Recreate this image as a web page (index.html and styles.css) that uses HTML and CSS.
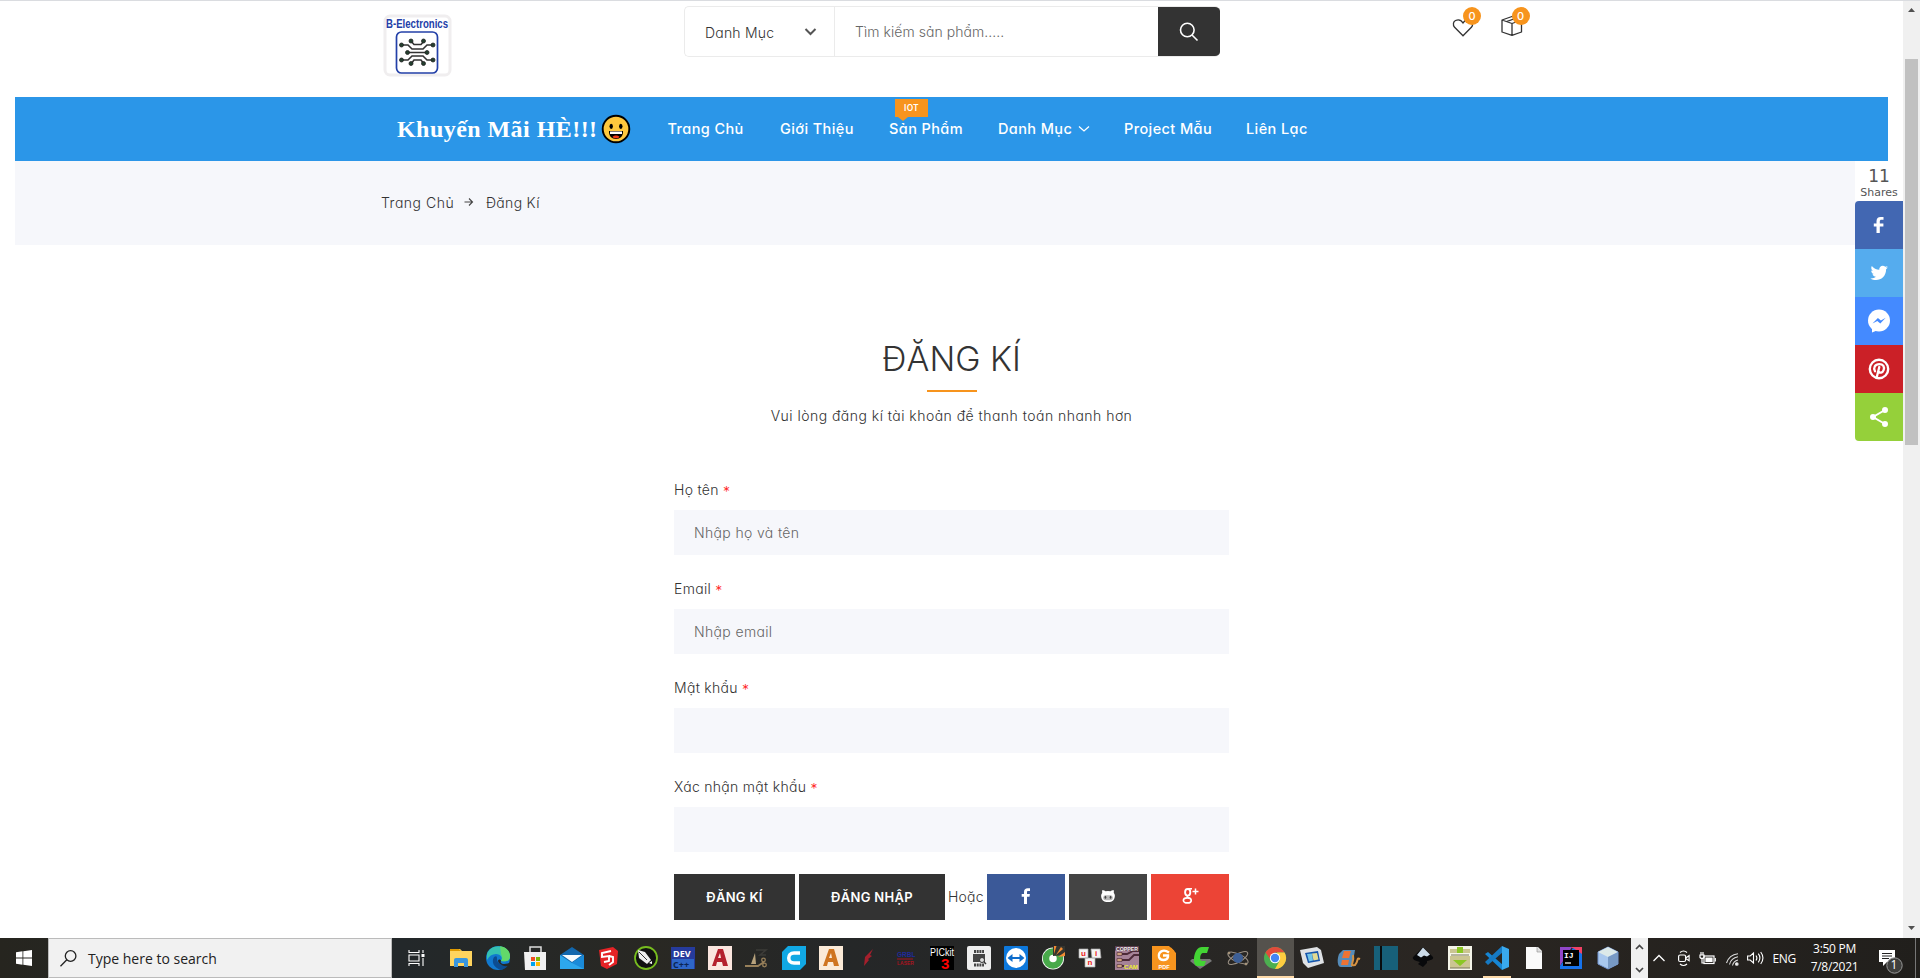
FILE: index.html
```html
<!DOCTYPE html>
<html lang="vi">
<head>
<meta charset="utf-8">
<title>B-Electronics - Đăng Kí</title>
<link rel="stylesheet" href="styles.css">
</head>
<body>
<div class="viewport">
  <div class="page">
    <header class="top">
      <svg class="logo" width="68" height="62" viewBox="0 0 68 62">
        <rect x="1" y="1" width="65" height="59" rx="5" fill="#fff" stroke="#f0eeef" stroke-width="3"/>
        <text x="2" y="13" textLength="62" lengthAdjust="spacingAndGlyphs" class="logo-text">B-Electronics</text>
        <rect x="12.500" y="17" width="41" height="41" rx="5" fill="#fff" stroke="#2340a8" stroke-width="1.700"/>
        <g fill="none" stroke="#333" stroke-width="1.600">
          <path d="M18 30h6l4 4h11l4-4h6M27 26l3 3.500h7l3-3.500M24 37.500h18M18 45h6l4-4h11l4 4h6M27 49l3-4h7l3 4"/>
        </g>
        <g fill="#23402f" stroke="#222" stroke-width=".8"><circle cx="17.500" cy="30" r="2"/><circle cx="49" cy="30" r="2"/><circle cx="27" cy="26" r="2"/><circle cx="39.500" cy="26" r="2"/><circle cx="23.500" cy="37.500" r="2"/><circle cx="43" cy="37.500" r="2"/><circle cx="17.500" cy="45" r="2"/><circle cx="49" cy="45" r="2"/><circle cx="27" cy="48.500" r="2"/><circle cx="39.500" cy="48.500" r="2"/></g>
      </svg>
      <form class="search">
        <div class="search-cat"><span>Danh Mục</span><svg width="13" height="10" viewBox="0 0 13 10"><path d="M1.500 2l5 5 5-5" fill="none" stroke="#555" stroke-width="2"/></svg></div>
        <div class="search-input">Tìm kiếm sản phẩm.....</div>
        <div class="search-btn"><svg width="20" height="20" viewBox="0 0 20 20" fill="none" stroke="#fff" stroke-width="1.600"><circle cx="8.300" cy="8" r="6.800"/><path d="M13 13l5.500 5.500"/></svg></div>
      </form>
      <div class="actions">
        <div class="action"><svg width="22" height="18" viewBox="0 0 22 18" fill="none" stroke="#333" stroke-width="1.300"><path d="M11 16.800L2.600 8.300C.5 5.500 1.300 2.700 3.500 1.500 6.500.2 9.300 1.200 11 4c1.700-2.800 4.500-3.800 7.500-2.500 2.200 1.200 3 4 .9 6.800z"/></svg><b class="count">0</b></div>
        <div class="action"><svg width="22" height="20" viewBox="0 0 22 20" fill="none" stroke="#333" stroke-width="1.300" stroke-linejoin="round"><path d="M1 4l10-3.500L20.500 4v12L11 19.300 1 16zM1 4l10 3.500L20.500 4M11 7.500v11.800M5.500 5.600L15.500 2"/></svg><b class="count">0</b></div>
      </div>
    </header>
    <nav class="nav">
      <div class="promo"><span>Khuyến Mãi HÈ!!!</span>
        <svg width="30" height="30" viewBox="0 0 30 30"><circle cx="15" cy="15" r="13.300" fill="#ffc83d" stroke="#000" stroke-width="1.900"/><ellipse cx="10.200" cy="12.300" rx="1.700" ry="2.600"/><ellipse cx="19.800" cy="12.300" rx="1.700" ry="2.600"/><path d="M8 17h14c.5 5-3 8-7 8s-7.500-3-7-8z" fill="#000"/><path d="M9 17.500h12v2.500H9z" fill="#fff"/><path d="M11.500 23c1-2 6-2 7 0-1 1.800-6 1.800-7 0z" fill="#f03a17"/></svg>
      </div>
      <a>Trang Chủ</a><a>Giới Thiệu</a><a>Sản Phẩm<i class="tag">IOT</i></a><a>Danh Mục<svg width="12" height="8" viewBox="0 0 12 8"><path d="M1 1.500l5 4.500 5-4.500" fill="none" stroke="#fff" stroke-width="1.300"/></svg></a><a>Project Mẫu</a><a>Liên Lạc</a>
    </nav>
    <div class="crumbs"><span class="home">Trang Chủ</span><svg width="10" height="10" viewBox="0 0 10 10" fill="none" stroke="#444" stroke-width="1.100"><path d="M.5 5h8M5 1.500L8.500 5 5 8.500"/></svg><span class="here">Đăng Kí</span></div>
    <main class="register">
      <h1>ĐĂNG KÍ</h1>
      <p class="lead">Vui lòng đăng kí tài khoản để thanh toán nhanh hơn</p>
      <div class="field"><label>Họ tên <em>*</em></label><div class="input">Nhập họ và tên</div></div>
      <div class="field"><label>Email <em>*</em></label><div class="input">Nhập email</div></div>
      <div class="field"><label>Mật khẩu <em>*</em></label><div class="input"></div></div>
      <div class="field last"><label>Xác nhận mật khẩu <em>*</em></label><div class="input"></div></div>
      <div class="buttons">
        <button class="btn signup">ĐĂNG KÍ</button><button class="btn signin">ĐĂNG NHẬP</button><span class="or">Hoặc</span>
        <button class="btn fb"><svg width="10" height="16" viewBox="0 0 10 16"><path d="M9 .3v2.600H7.300C6.200 2.900 6 3.400 6 4.200V6h2.900l-.4 2.800H6V16H3V8.800H.7V6H3V3.900C3 1.500 4.500.2 6.700.2c1 0 2 .1 2.300.1z" fill="#fff"/></svg></button>
        <button class="btn gh"><svg width="14" height="12" viewBox="0 0 16 14"><path d="M1.500 0C3 .1 4.200.8 5 1.500a14 14 0 016 0C11.800.8 13 .1 14.500 0c.5 1.300.4 2.600.2 3.300C16.500 5.500 16.300 8 15.200 10.500 14 13.500 11 14 8 14S2 13.500.8 10.500C-.3 8-.5 5.500 1.300 3.300 1.100 2.600 1 1.300 1.500 0z" fill="#fff"/><rect x="2.500" y="6" width="11" height="6" rx="2.500" fill="#b9b9b9"/><ellipse cx="5" cy="8.500" rx="1" ry="1.800" fill="#444"/><ellipse cx="11" cy="8.500" rx="1" ry="1.800" fill="#444"/></svg></button>
        <button class="btn gp"><svg width="17" height="16" viewBox="0 0 17 16" fill="none" stroke="#fff"><ellipse cx="5.700" cy="4.300" rx="2.600" ry="3.300" stroke-width="1.900"/><path d="M6 .8h4M6 7.600C4 9 6 9.300 7.500 10.200" stroke-width="1.600"/><ellipse cx="5.300" cy="12.400" rx="3.900" ry="2.500" stroke-width="1.700"/><path d="M10.500 3.500h6M13.500.6v6" stroke-width="1.500"/></svg></button>
      </div>
    </main>
  </div>
  <aside class="share">
    <div class="share-count"><strong>11</strong><span>Shares</span></div>
    <div class="tile s-fb"><svg width="32" height="32" viewBox="0 0 32 32" fill="#fff"><path d="M20.500 8v2.800h-2c-1.200 0-1.700.5-1.700 1.700v2h3.600v3h-3.600V24h-3.300v-6.500h-2.700v-3h2.700v-2.200C13.500 9.500 15 8 17.600 8z"/></svg></div>
    <div class="tile s-tw"><svg width="32" height="32" viewBox="0 0 32 32" fill="#fff"><path d="M25 10.300c-.6.300-1.300.5-2 .6.700-.5 1.300-1.200 1.600-2-.7.400-1.500.7-2.300.9-2.400-2.500-6.500-.6-6 3-3-.1-5.700-1.600-7.500-3.800-1 1.700-.5 3.800 1.100 4.900-.6 0-1.200-.2-1.700-.5 0 1.800 1.200 3.300 2.900 3.700-.5.100-1.100.2-1.600.1.500 1.500 1.800 2.500 3.400 2.600C11.400 21 9.300 21.600 7.300 21.400c6.700 4.200 15.800.3 15.800-9.100.8-.5 1.400-1.200 1.900-2z"/></svg></div>
    <div class="tile s-ms"><svg width="32" height="32" viewBox="0 0 32 32"><circle cx="16" cy="15.500" r="11" fill="#fff"/><path d="M9 21v6.500l5-2z" fill="#fff"/><path d="M9.500 18.500l5.400-5.500 3 2.500 4.800-2.700-5.400 5.700-3-2.600z" fill="#448aff"/></svg></div>
    <div class="tile s-pi"><svg width="32" height="32" viewBox="0 0 32 32" fill="none" stroke="#fff" stroke-linecap="round"><circle cx="16" cy="16" r="9.200" stroke-width="2.400"/><path d="M12 18.300c-2-3.700 0-7.200 4.300-7.200 4 0 5.500 3 4.300 6-1 2.800-4 3.200-5 1.300M16.300 14l-2.500 10" stroke-width="2.300"/></svg></div>
    <div class="tile s-sh"><svg width="32" height="32" viewBox="0 0 32 32" fill="#fff" stroke="#fff" stroke-width="2"><path d="M22 9L10 16l12 7" fill="none"/><circle cx="22" cy="9" r="2"/><circle cx="10" cy="16" r="2"/><circle cx="22" cy="23" r="2"/></svg></div>
  </aside>
  <div class="scrollbar"><svg width="17" height="17" viewBox="0 0 17 17"><path d="M5 11l3.500-4 3.500 4z" fill="#505050"/></svg><div class="thumb"></div><svg width="17" height="17" viewBox="0 0 17 17"><path d="M5 6l3.500 4L12 6z" fill="#505050"/></svg></div>
</div>
<footer class="taskbar">
  <div class="start"><svg width="16" height="16" viewBox="0 0 16 16" fill="#fff"><path d="M0 2.200L6.500 1.300v6.300H0zM7.300 1.200L16 0v7.600H7.300zM0 8.400h6.500v6.300L0 13.800zM7.300 8.400H16V16l-8.700-1.200z"/></svg></div>
  <div class="tb-search"><svg width="17" height="17" viewBox="0 0 17 17" fill="none" stroke="#222" stroke-width="1.300"><circle cx="10.600" cy="6" r="5.300"/><path d="M6.800 9.800L.5 16.300"/></svg><span>Type here to search</span></div>
  <div class="taskview"><svg width="17" height="16" viewBox="0 0 17 16" fill="none" stroke="#fff" stroke-width="1.100"><path d="M1 0v2.500h10V0M1 16v-2.500h10V16M1 5h10v6H1zM15 0v3M15 8v8"/><path d="M13.500 4h3v3h-3z" fill="#fff" stroke="none"/></svg></div>
  <div class="apps">
    <div><svg viewBox="0 0 24 24"><path d="M1 3h10l2 2h10v15H1z" fill="#ffd45e"/><path d="M1 3h9l2 2H1z" fill="#e09a00"/><path d="M5 21v-7q0-2 2-2h10q2 0 2 2v7h-4v-4H9v4z" fill="#3a96dd"/></svg></div>
    <div><svg viewBox="0 0 24 24"><circle cx="12" cy="12" r="12" fill="#1179cf"/><path d="M1 8C4-2 22-3 24 10c0 5-4 6-9 5 2-3 0-7-5-7-4 0-7 2-9 6z" fill="#35c1b1"/><path d="M14 .3C20 1 24 5 24 10c0 5-4 6-9 5 2-3 1-5 0-7z" fill="#62d86a"/><path d="M8 11c-3 5 0 11 7 13 4-1 7-4 8-6-5 3-12 0-12-5 0-2 0-4-3-2z" fill="#0c4d91"/><path d="M15 15c-1 1 0 3 3 3 3 0 5-1 5-1l1 3c-5 1-11-1-12-5 0-2 3-2 3 0z" fill="#252827"/></svg></div>
    <div><svg viewBox="0 0 24 24"><path d="M7 6V1h11v5" fill="none" stroke="#ddd" stroke-width="1.500"/><path d="M1 6h22v18H2z" fill="#f1f1f1"/><path d="M8 11h4v4H8z" fill="#f25022"/><path d="M13 11h4v4h-4z" fill="#7fba00"/><path d="M8 16h4v4H8z" fill="#00a4ef"/><path d="M13 16h4v4h-4z" fill="#ffb900"/></svg></div>
    <div><svg viewBox="0 0 24 24"><path d="M0 9L12 1l12 8v14H0z" fill="#1267ad"/><path d="M0 9l12 8 12-8v14H0z" fill="#2da7ec"/><path d="M24 9v14L12 17z" fill="#1a8ad8"/><path d="M2 9h20l-10 7z" fill="#f5fafd"/></svg></div>
    <div><svg viewBox="0 0 24 24"><path d="M2 4l14-3 5 4-1 13-10 5-6-3z" fill="#e52326"/><path d="M14 5L5 7v4l7-1v5l-5 1M12 10l4 1v5l-4 3" fill="none" stroke="#fff" stroke-width="1.900"/></svg></div>
    <div><svg viewBox="0 0 24 24"><circle cx="12" cy="12" r="11" fill="#111" stroke="#77bc1f" stroke-width="1.800"/><path d="M4 4l7 2 6 8-4 4-8-6z" fill="#eee"/><path d="M15 17l3-2v3z" fill="#fff"/><path d="M5 6l8 8" stroke="#333"/></svg></div>
    <div><svg viewBox="0 0 24 24"><rect y="1" width="24" height="22" fill="#263b9c"/><rect x="1" y="13" width="22" height="10" fill="#2e66c8"/><text x="2" y="11" class="t-dev">DEV</text><text x="2" y="22" class="t-cpp">C++</text></svg></div>
    <div><svg viewBox="0 0 24 24"><rect width="24" height="24" fill="#fbe6df"/><path d="M4 20L10 3h5l5 17h-5l-1-4H9l-1 4zM10 12h3l-1-5z" fill="#b4202d" fill-rule="evenodd"/></svg></div>
    <div><svg viewBox="0 0 24 24"><path d="M6 18l4-11 1 11z" fill="#b7a27c"/><path d="M0 20h13l6-4" fill="none" stroke="#98805a" stroke-width="1.800"/><circle cx="18.500" cy="14" r="1.800" fill="none" stroke="#98805a" stroke-width="1.300"/><circle cx="19.500" cy="19" r="1.800" fill="none" stroke="#98805a" stroke-width="1.300"/><path d="M11 4h10l-6 5h6" fill="none" stroke="#3d3c38" stroke-width="1.500"/></svg></div>
    <div><svg viewBox="0 0 24 24"><path d="M6 0h18v18l-6 6H0V6z" fill="#11a8e4"/><path d="M18 7h-6c-7 0-7 10 0 10h6" fill="none" stroke="#fff" stroke-width="3.500"/></svg></div>
    <div><svg viewBox="0 0 24 24"><rect width="24" height="24" fill="#fbead8"/><path d="M4 20L10 3h5l5 17h-5l-1-4H9l-1 4zM10 12h3l-1-5z" fill="#cf7420" fill-rule="evenodd"/></svg></div>
    <div><svg viewBox="0 0 24 24"><path d="M8 20l1-9 8-8-3 6 2 1-4 3 1 1z" fill="#a51f2c"/></svg></div>
    <div><svg viewBox="0 0 24 24"><text x="4" y="11" class="t-grbl">GRBL</text><text x="4" y="19" class="t-laser">LASER</text><path d="M4 13h16" stroke="#a71420"/></svg></div>
    <div><svg viewBox="0 0 24 24"><rect width="24" height="24" fill="#000"/><text x="0" y="10" textLength="24" lengthAdjust="spacingAndGlyphs" class="t-pic">PICkit</text><text x="11" y="23" class="t-three">3</text></svg></div>
    <div><svg viewBox="0 0 24 24"><rect width="24" height="24" rx="2" fill="#eee"/><rect x="6" y="8" width="12" height="8" fill="#444"/><path d="M7 5.500h10M7 19h10" stroke="#444" stroke-width="3" stroke-dasharray="2 .7"/><circle cx="15" cy="14" r="2.500" fill="#ddd" stroke="#333"/><path d="M17 16l2 2" stroke="#333" stroke-width="1.500"/></svg></div>
    <div><svg viewBox="0 0 24 24"><rect width="24" height="24" rx="1" fill="#0d78dc"/><circle cx="12" cy="12" r="10" fill="#fff"/><path d="M3.500 12l5-4v3h7V8l5 4-5 4v-3h-7v3z" fill="#0d6ccb"/></svg></div>
    <div><svg viewBox="0 0 24 24"><circle cx="12" cy="12.500" r="11" fill="#fff"/><circle cx="12" cy="12.500" r="7" fill="#fff" stroke="#48a94a" stroke-width="6.500"/><path d="M12 10V0h12v9z" fill="#35352f"/><path d="M13 8V0h2.500zM15 9l5-8 2 2zM17 11l7-5v4z" fill="#f28b32"/></svg></div>
    <div><svg viewBox="0 0 24 24"><g fill="#f3f3f3" stroke="#aaa" stroke-width=".7"><path d="M1 3h9v9H1zM13 3h9l1 9h-9zM7 12h10v9H7z"/></g><text x="3" y="10" class="t-uni">u</text><text x="17" y="10" class="t-uni">i</text><text x="9.500" y="19" class="t-uni">n</text></svg></div>
    <div><svg viewBox="0 0 24 24"><rect width="24" height="24" fill="#a68398"/><path d="M0 0h24v4.500H0z" fill="#5a3c4c"/><path d="M7 8h5l6-3h6M7 14h7l5-5h5M7 20h2" fill="none" stroke="#4c2a38" stroke-width="1.800"/><path d="M2 6.500h5v3H2zM2 12.500h5v3H2zM2 18.500h5v3H2z" fill="#cda27e" stroke="#4c2a38" stroke-width=".6"/><text x="1" y="4.500" textLength="22" lengthAdjust="spacingAndGlyphs" class="t-cop">COPPER</text><text x="9" y="23" textLength="14" lengthAdjust="spacingAndGlyphs" class="t-cam">CAM</text></svg></div>
    <div><svg viewBox="0 0 24 24"><path d="M0 0h17l7 7v17H0z" fill="#f7941e"/><path d="M18.500 1v4.500H23z" fill="#f7941e"/><path d="M17 6.500C11 2.500 6 6 7 11c1 4 8 4 9 0v-1.500h-5" fill="none" stroke="#fff" stroke-width="2.300"/><text x="6.500" y="22.500" class="t-pdf">PDF</text></svg></div>
    <div><svg viewBox="0 0 24 24"><path d="M1 15l10 8 12-8-2-2H3z" fill="#777"/><path d="M20 1l-2 6h-4c-3 0-4 8-1 8h4l-2 5H8c-5 0-4-19 5-19z" fill="#43d434"/></svg></div>
    <div><svg viewBox="0 0 24 24" fill="none" stroke="#9b9185"><ellipse cx="12" cy="12" rx="11" ry="4" transform="rotate(25 12 12)"/><ellipse cx="12" cy="12" rx="11" ry="4" transform="rotate(-30 12 12)"/><circle cx="12" cy="12" r="5" fill="#3d5f96" stroke="none"/><circle cx="3" cy="7" r="1" fill="#e7b260"/><circle cx="20" cy="18" r="1" fill="#e7b260"/></svg></div>
    <div class="active"><svg viewBox="0 0 24 24"><circle cx="12" cy="12" r="11" fill="#4caf50"/><path d="M2.500 6.500A11 11 0 0121.500 6.500H12L7 13z" fill="#e14b3b"/><path d="M21.600 6.500A11 11 0 0112 23l5-9-3-7.500z" fill="#ffcd40"/><circle cx="12" cy="12" r="5.200" fill="#fff"/><circle cx="12" cy="12" r="4.200" fill="#4285f4"/></svg></div>
    <div><svg viewBox="0 0 24 24"><path d="M0 4l17-3 4 3 3 13-16 5-5-5z" fill="#dfe2e5"/><path d="M5 7l13-2 2 10-12 2z" fill="#1554ac"/><path d="M7 8l5-.5 1 7-4 1z" fill="#72c5e9"/><path d="M12 7.500l5-.5 1.500 6.500-5 1z" fill="#e3db93"/></svg></div>
    <div><svg viewBox="0 0 24 24"><path d="M2 8l4-4h12l-3 17H4c-4 0-4-8-2-13z" fill="#558bb8"/><path d="M7 5h7l-2 7H5zM5 14h7l-1 5H4z" fill="#ec7334"/><path d="M16 9c2 9-5 11 2 10 4-4 1-8 5-6" fill="none" stroke="#d69242" stroke-width="2"/></svg></div>
    <div><svg viewBox="0 0 24 24"><rect width="24" height="24" fill="#176079"/><path d="M7 0v24" stroke="#080c0e" stroke-width="2"/></svg></div>
    <div><svg viewBox="0 0 24 24"><path d="M12 1l10 10c1 3-3 3-6 4v2l-4 4-5-3 2-2c-5-1-8-3-7-5z" fill="#08090b"/><path d="M12 1.500l7 7-3 2-3-1-3 2-4-2.500z" fill="#cbdbe9"/></svg></div>
    <div><svg viewBox="0 0 24 24"><rect width="24" height="24" fill="#f5f5e9"/><path d="M2 3h20v4H2zM2 10h20v12H2z" fill="#cbc591"/><path d="M9 1h6v6H9zM5 14h14l-7 6z" fill="#8bc724"/><path d="M3 9h18M2 22h20" stroke="#797557"/></svg></div>
    <div class="running"><svg viewBox="0 0 24 24"><path d="M0 8l3-2 15 13-1 5z" fill="#1686d4"/><path d="M0 16L17 0l1 6L3 19z" fill="#167ac4"/><path d="M17 0l7 3v18l-7 3z" fill="#39a9ee"/></svg></div>
    <div><svg viewBox="0 0 24 24"><path d="M4 1h12l4 4v18H4z" fill="#fafafa"/><path d="M15 1v5h5" fill="#ddd" stroke="#999" stroke-width=".7"/></svg></div>
    <div><svg viewBox="0 0 24 24"><path d="M1 1h12L1 20z" fill="#9147c9"/><path d="M12 1h11v8z" fill="#f34165"/><path d="M1 20L14 2l9 6v15H1z" fill="#1672eb"/><rect x="4" y="4" width="16" height="16" fill="#000"/><text x="5" y="12" class="t-ij">IJ</text><path d="M6 17h6" stroke="#fff" stroke-width="1.200"/></svg></div>
    <div><svg viewBox="0 0 24 24"><path d="M2 6l10-5 10 5v12l-10 5-10-5z" fill="#a9c8ee" stroke="#7394cf"/><path d="M2 6l10-5 10 5-10 5z" fill="#dce9e9"/><path d="M12 11l10-5v12l-10 5z" fill="#7799c4"/></svg></div>
  </div>
  <div class="spin"><svg width="9" height="6" viewBox="0 0 9 6"><path d="M1 5l3.500-3.500L8 5" fill="none" stroke="#444" stroke-width="1.700"/></svg><svg width="9" height="6" viewBox="0 0 9 6"><path d="M1 1l3.500 3.500L8 1" fill="none" stroke="#444" stroke-width="1.700"/></svg></div>
  <div class="tray">
    <svg class="up" width="12" height="8" viewBox="0 0 12 8"><path d="M.5 7L6 1.500 11.500 7" fill="none" stroke="#fff" stroke-width="1.300"/></svg>
    <svg class="cam" width="12" height="16" viewBox="0 0 12 16" fill="none" stroke="#fff" stroke-width="1.200"><rect x=".6" y="5" width="7" height="6.500" rx="1.500"/><path d="M7.600 8l3.500-2.300v5L7.600 8.600M2 2.500Q5.500-.5 9 2.500M2 14Q5.500 17 9 14"/></svg>
    <svg class="bat" width="17" height="13" viewBox="0 0 17 13" fill="none" stroke="#fff" stroke-width="1.200"><rect x="5" y="4" width="10" height="7.500"/><path d="M7 6h6v3.500H7z" fill="#fff"/><path d="M16.300 6v3.500M1 3v2.500q2 2 4 0V3zM2 0v3M4 0v3M3 6.500V11h2"/></svg>
    <svg class="wifi" width="13" height="13" viewBox="0 0 13 13" fill="none" stroke="#ddd" stroke-width="1.100"><path d="M.5 10Q3 2 12 .7M3.500 11.500Q5 5 12 3.800M6.500 12.500Q7.500 8 12 7"/><circle cx="10.800" cy="11" r="1.300" fill="#fff"/></svg>
    <svg class="vol" width="17" height="14" viewBox="0 0 17 14" fill="none" stroke="#fff" stroke-width="1.100"><path d="M.6 5h2.600L6.500 2v10L3.200 9H.6zM9 4.500q1.800 2.500 0 5M11.300 2.700q3.200 4.300 0 8.600M13.700 1q4.500 6 0 12"/></svg>
    <span class="lang">ENG</span>
    <div class="clock"><span>3:50 PM</span><span>7/8/2021</span></div>
    <div class="notes"><svg width="24" height="24" viewBox="0 0 24 24"><path d="M0 0h16v12H8l-4 4v-4H0z" fill="#fff"/><path d="M3 3.500h10M3 6h10M3 8.500h7" stroke="#222"/><circle cx="15.500" cy="15.500" r="7.700" fill="#3f3f3d" stroke="#999"/></svg><b>1</b></div>
  </div>
</footer>
</body>
</html>
```
FILE: styles.css
```css
* { box-sizing: border-box; }
body { margin: 0; width: 1920px; height: 978px; overflow: hidden; background: #fff; color: #333; font-family: Inter, "Open Sans", sans-serif; font-feature-settings: "cv11"; font-size: 14px; }
svg { display: block; flex: none; overflow: visible; }
span, a, label, p, h1 { white-space: nowrap; }
.viewport { position: relative; height: 938px; border-top: 1px solid #dadce0; display: flex; }
.page { width: 1903px; padding: 0 15px; }
.top { height: 96px; display: flex; align-items: flex-start; padding-left: 368.5px; }
.logo { margin-top: 14px; }
.logo-text { font: bold 12px "Liberation Sans Narrow", "Liberation Sans", sans-serif; fill: #2340a8; }
.search { margin: 5px 0 0 232.5px; width: 536px; height: 51px; display: flex; border-radius: 5px; overflow: hidden; border: 1px solid #ebebeb; border-right: 0; }
.search-cat { width: 150px; border-right: 1px solid #ebebeb; padding: 1px 17px 0 20px; display: flex; align-items: center; justify-content: space-between; letter-spacing: .2px; font-weight: 300; }
.search-input { flex: 1; padding-left: 20px; line-height: 49px; color: #666; font-weight: 300; letter-spacing: .05px; }
.search-btn { width: 62px; margin: -1px 0; background: #333; padding: 16px 0 0 21px; }
.actions { display: flex; gap: 26.5px; margin: 15px 0 0 232px; }
.action { position: relative; width: 22px; padding-top: 3px; }
.action + .action { padding-top: 0; }
.count { position: absolute; left: 11px; top: -9px; width: 18px; height: 18px; border-radius: 9px; background: #f7941d; color: #fff; font-size: 11px; font-weight: 500; line-height: 18px; text-align: center; }
.nav { height: 64px; background: #2b96e8; color: #fff; display: grid; grid-template-columns: 270.5px 112.5px 109px 109px 126px 122px 70px; padding-left: 382px; font-size: 14.5px; font-weight: 500; letter-spacing: .4px; }
.nav a { position: relative; line-height: 62px; display: flex; align-items: center; gap: 6px; }
.promo { display: flex; align-items: center; gap: 3px; font: bold 24px/60px "Liberation Serif", serif; letter-spacing: .45px; }
.tag { position: absolute; left: 6px; top: 2px; width: 33px; height: 18px; background: #f7941d; font: 600 8.5px/18px Inter, sans-serif; letter-spacing: .2px; text-align: center; }
.tag::after { content: ""; position: absolute; left: 3px; top: 18px; border: 5px solid transparent; border-top: 4px solid #f7941d; border-bottom: 0; }
.crumbs { height: 84px; background: #f6f7fb; padding: 0 0 2px 366px; display: flex; align-items: center; font-weight: 300; }
.home { width: 83px; letter-spacing: .5px; }
.here { margin-left: 12px; letter-spacing: .3px; }
.register { width: 555px; margin: 0 auto; display: flex; flex-direction: column; }
h1 { position: relative; margin: 91px 0 0; height: 55px; text-align: center; font-weight: 350; font-size: 34px; line-height: 46px; }
h1::after { content: ""; position: absolute; left: 253px; bottom: -1px; width: 50px; height: 2px; background: #f7941d; }
.lead { margin: 14px 0 53px; text-align: center; line-height: 22px; font-weight: 300; letter-spacing: .47px; }
.field { height: 99px; display: flex; flex-direction: column; }
.field label { height: 30px; line-height: 20px; font-weight: 300; letter-spacing: .3px; }
.last { height: 97px; }
.field em { color: #f22; font-style: normal; vertical-align: -2px; }
.input { height: 45px; background: #f6f7fb; padding-left: 20px; line-height: 46px; color: #666; font-weight: 300; letter-spacing: .35px; }
.buttons { display: flex; }
.btn { height: 46px; border: 0; padding: 0; width: 78px; color: #fff; background: #333; font: 600 13px Inter, sans-serif; letter-spacing: .3px; display: flex; align-items: center; justify-content: center; white-space: nowrap; }
.signup { width: 121px; margin-right: 4px; }
.signin { width: 146px; }
.or { width: 42px; line-height: 46px; padding-left: 3px; font-weight: 300; letter-spacing: .2px; }
.fb { background: #3b5998; padding-bottom: 2px; }
.gh { background: #444; margin: 0 4px; padding-bottom: 2px; }
.gp { background: #ec4436; padding-bottom: 2px; }
.share { position: absolute; left: 1855px; top: 160px; width: 48px; font-family: "DejaVu Sans", sans-serif; }
.share-count { height: 40px; background: #fff; color: #555; display: flex; flex-direction: column; align-items: center; }
.share-count strong { font-size: 17px; font-weight: 400; line-height: 17px; margin-top: 7px; }
.share-count span { font-size: 11px; line-height: 13px; margin-top: 1px; }
.tile { height: 48px; padding: 8px; }
.s-fb { background: #4267b2; border-top-left-radius: 4px; }
.s-tw { background: #55acee; }
.s-ms { background: #448aff; }
.s-pi { background: #cb2027; }
.s-sh { background: #95d03a; border-bottom-left-radius: 4px; }
.scrollbar { width: 17px; height: 937px; background: #f0f0f0; display: flex; flex-direction: column; }
.thumb { width: 13px; height: 386px; background: #c1c1c1; margin: 41px 2px 475px; }
.taskbar { height: 40px; background: linear-gradient(90deg, #26251f 0, #23282a 21%, #292823 34%, #252728 44%, #2a2622 75%, #211f1c 100%); display: flex; font-family: "Open Sans", sans-serif; color: #fff; }
.start { width: 48px; padding: 12px 16px; }
.tb-search { width: 344px; background: #f1f1f1; border: 1px solid #bbb; padding-left: 11px; display: flex; align-items: center; gap: 11px; color: #222; font-size: 14px; }
.taskview { width: 50.5px; padding: 12px 15.5px; }
.apps { display: flex; width: 1188px; }
.apps div { width: 37.03px; height: 40px; padding: 8px 6.5px; flex: none; }
.apps svg { width: 24px; height: 24px; }
.apps .active { background: #55524d; border-bottom: 2px solid #fdd9a8; }
.apps .running { background: linear-gradient(#fdd9a8, #fdd9a8) 4px 38px / 28px 2px no-repeat; }
.t-dev { font: bold 9px "Open Sans", sans-serif; fill: #fff; }
.t-cpp { font: bold 9px "Open Sans", sans-serif; fill: #0b2554; }
.t-grbl { font: bold 6.5px "Liberation Sans", sans-serif; fill: #202a9b; }
.t-laser { font: bold 5px "Liberation Sans", sans-serif; fill: #a71420; }
.t-pic { font: 10px "Liberation Sans", sans-serif; fill: #fff; }
.t-three { font: bold 15px "Liberation Sans", sans-serif; fill: #f00; }
.t-uni { font: bold 8px "Liberation Sans", sans-serif; fill: #e22; }
.t-cop { font: bold 5px "Liberation Sans", sans-serif; fill: #eee; }
.t-cam { font: bold 6px "Liberation Sans", sans-serif; fill: #ee3; }
.t-pdf { font: bold 5.5px "Liberation Sans", sans-serif; fill: #fff; }
.t-ij { font: bold 8px "Liberation Mono", monospace; fill: #fff; }
.spin { width: 17px; margin-right: -1px; background: #f0f0f0; display: flex; flex-direction: column; justify-content: space-between; align-items: center; padding: 6px 0 5px; }
.tray { flex: 1; display: flex; align-items: center; padding-left: 6px; }
.cam { margin-left: 13px; }
.bat { margin-left: 9px; }
.wifi { margin: 3px 0 0 10px; }
.vol { margin-left: 8px; }
.lang { font-size: 12px; width: 24px; margin-left: 9px; letter-spacing: -.3px; }
.clock { width: 52px; margin-left: 12px; display: flex; flex-direction: column; align-items: center; font-size: 12px; line-height: 18px; letter-spacing: -.3px; }
.notes { position: relative; width: 37px; height: 40px; padding-top: 12px; margin-left: 18px; border-right: 1px solid #777; }
.notes b { position: absolute; left: 12px; top: 19px; font-size: 12px; line-height: 16px; font-weight: 400; }
```
